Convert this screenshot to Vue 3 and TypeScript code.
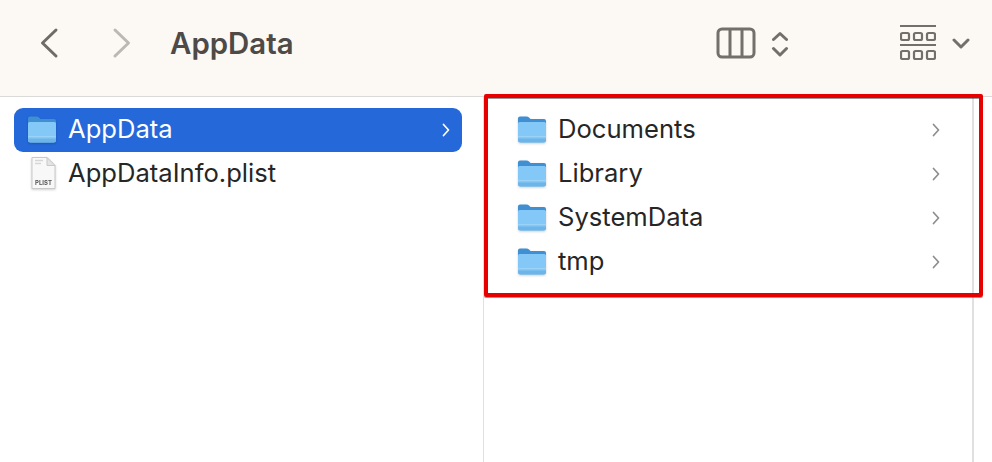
<script setup lang="ts">
interface Row { name: string; kind: 'folder' | 'plist'; selected?: boolean; chevron?: boolean }
const left: Row[] = [
  { name: 'AppData', kind: 'folder', selected: true, chevron: true },
  { name: 'AppDataInfo.plist', kind: 'plist' },
]
const right: Row[] = ['Documents', 'Library', 'SystemData', 'tmp'].map((name) => ({ name, kind: 'folder', chevron: true }))
const columns = [
  { id: 'a', rows: left },
  { id: 'b', rows: right },
]
</script>

<template>
  <div class="finder">
    <header class="toolbar">
      <svg class="nav back" width="24" height="32" viewBox="0 0 24 32"><path d="M18 3 L4.500 16 L18 29" /></svg>
      <svg class="nav fwd" width="24" height="32" viewBox="0 0 24 32"><path d="M6 3 L19.500 16 L6 29" /></svg>
      <h1 class="title">AppData</h1>
      <svg class="view-icon" width="40" height="32" viewBox="0 0 40 32">
        <rect x="2" y="2" width="36" height="28" rx="4" />
        <path d="M14 2V30M26 2V30" />
      </svg>
      <svg class="updown" width="18" height="28" viewBox="0 0 18 28">
        <path d="M2.500 10.500 L9 4.500 L15.500 10.500M2.500 19.500 L9 26 L15.500 19.500" />
      </svg>
      <svg class="group-icon" width="36" height="36" viewBox="0 0 36 36">
        <path d="M0 1H36M0 20H36" />
        <rect x="1" y="8" width="8" height="7" rx="1.500" />
        <rect x="14" y="8" width="8" height="7" rx="1.500" />
        <rect x="27" y="8" width="8" height="7" rx="1.500" />
        <rect x="1" y="26" width="8" height="8" rx="1.500" />
        <rect x="14" y="26" width="8" height="8" rx="1.500" />
        <rect x="27" y="26" width="8" height="8" rx="1.500" />
      </svg>
      <svg class="caret" width="18" height="12" viewBox="0 0 18 12"><path d="M2 3 L9 10 L16 3" /></svg>
    </header>

    <main class="columns">
      <section v-for="col in columns" :key="col.id" class="column" :class="col.id">
        <div v-for="row in col.rows" :key="row.name" class="row" :class="{ selected: row.selected }">
          <svg v-if="row.kind === 'folder'" class="icon folder" width="30" height="30" viewBox="0 0 30 30">
            <path d="M1 9 V3.500 Q1 1.500 3 1.500 H9.500 Q11 1.500 12 2.500 L13.500 4 H27 Q29 4 29 6 V9 Z" fill="#3f8fd2" />
            <path d="M1 8.500 Q1 7 2.500 7 H27.500 Q29 7 29 8.500 V25 Q29 27.500 26.500 27.500 H3.500 Q1 27.500 1 25 Z" fill="#84c8f7" />
            <path d="M1 23.500 H29 V25 Q29 27.500 26.500 27.500 H3.500 Q1 27.500 1 25 Z" fill="#6db4e8" />
            <path d="M1 21.500 H29" stroke="#9ad2f8" stroke-width="1" />
          </svg>
          <svg v-else class="icon doc" width="30" height="36" viewBox="0 0 30 36">
            <path d="M5 1.500 H20 L28 9.500 V32.500 H5 Z" fill="#f8f8f8" stroke="#c9c9c9" />
            <path d="M20 1.500 V9.500 H28 Z" fill="#e4e4e4" stroke="#c9c9c9" />
            <path d="M8 4.500 H16 M8 7.500 H14" stroke="#d6d6d6" stroke-width="1.500" />
            <text x="16.500" y="28.500" text-anchor="middle" class="plist">PLIST</text>
          </svg>
          <span class="name">{{ row.name }}</span>
          <svg v-if="row.chevron" class="chev" width="10" height="16" viewBox="0 0 10 16"><path d="M2.500 2.500 L7.500 8 L2.500 13.500" /></svg>
        </div>
      </section>
      <div class="tail"></div>
    </main>

    <div class="highlight"></div>
  </div>
</template>

<style>
html, body { margin: 0; background: #fff; }
</style>

<style scoped>
.finder {
  position: relative;
  width: 992px;
  height: 462px;
  overflow: hidden;
  background: #fff;
  font-family: Inter, "Liberation Sans", sans-serif;
  color: #262626;
}
.toolbar {
  display: flex;
  align-items: center;
  box-sizing: border-box;
  height: 97px;
  padding: 0 22px 10px 38px;
  background: #fcf8f4;
  border-bottom: 1px solid #dcdad8;
}
.toolbar svg { fill: none; stroke-linejoin: round; flex: none; }
.nav { stroke-width: 3; stroke-linecap: round; }
.back { stroke: #6f6b67; }
.fwd { stroke: #bcb9b5; margin-left: 47px; }
.title {
  margin: 0 0 0 37px;
  font-size: 29.400px;
  font-weight: 600;
  color: #4d4a47;
  flex: 1;
}
.view-icon, .updown, .group-icon, .caret { stroke: #736f6a; stroke-width: 3; }
.updown, .caret { stroke-linecap: round; }
.updown { margin-left: 15px; }
.group-icon { margin-left: 111px; stroke-width: 2.200; }
.caret { margin-left: 16px; }
.columns { display: flex; height: 365px; }
.column {
  box-sizing: border-box;
  padding-top: 11px;
  border-right: 1px solid #e0e0e0;
}
.column.a { width: 484px; padding-left: 14px; padding-right: 21px; }
.column.b { width: 490px; padding-left: 20px; padding-right: 20px; border-right-width: 2px; }
.tail { flex: 1; }
.row {
  display: flex;
  align-items: center;
  height: 44px;
  padding: 0 11px 0 13px;
  border-radius: 9px;
  font-size: 25.600px;
}
.row.selected { background: #2468da; color: #fff; }
.icon { flex: none; margin-right: 11px; }
.folder, .doc { filter: drop-shadow(0 1px 1px rgba(0, 0, 0, 0.18)); }
.plist { font-size: 6px; font-weight: 700; fill: #555; font-family: Inter, "Liberation Sans", sans-serif; }
.name { flex: 1; white-space: nowrap; margin-bottom: 4px; }
.chev { flex: none; fill: none; stroke: #8e8e8e; stroke-width: 1.700; stroke-linecap: round; stroke-linejoin: round; }
.selected .chev { stroke: #fff; }
.highlight {
  position: absolute;
  left: 484px;
  top: 94px;
  width: 499px;
  height: 203px;
  box-sizing: border-box;
  border: 4px solid #e60000;
  border-radius: 2px;
  box-shadow: 0 1px 0 rgba(0, 0, 0, 0.4), inset 0 1px 0 rgba(0, 0, 0, 0.4);
}
</style>
